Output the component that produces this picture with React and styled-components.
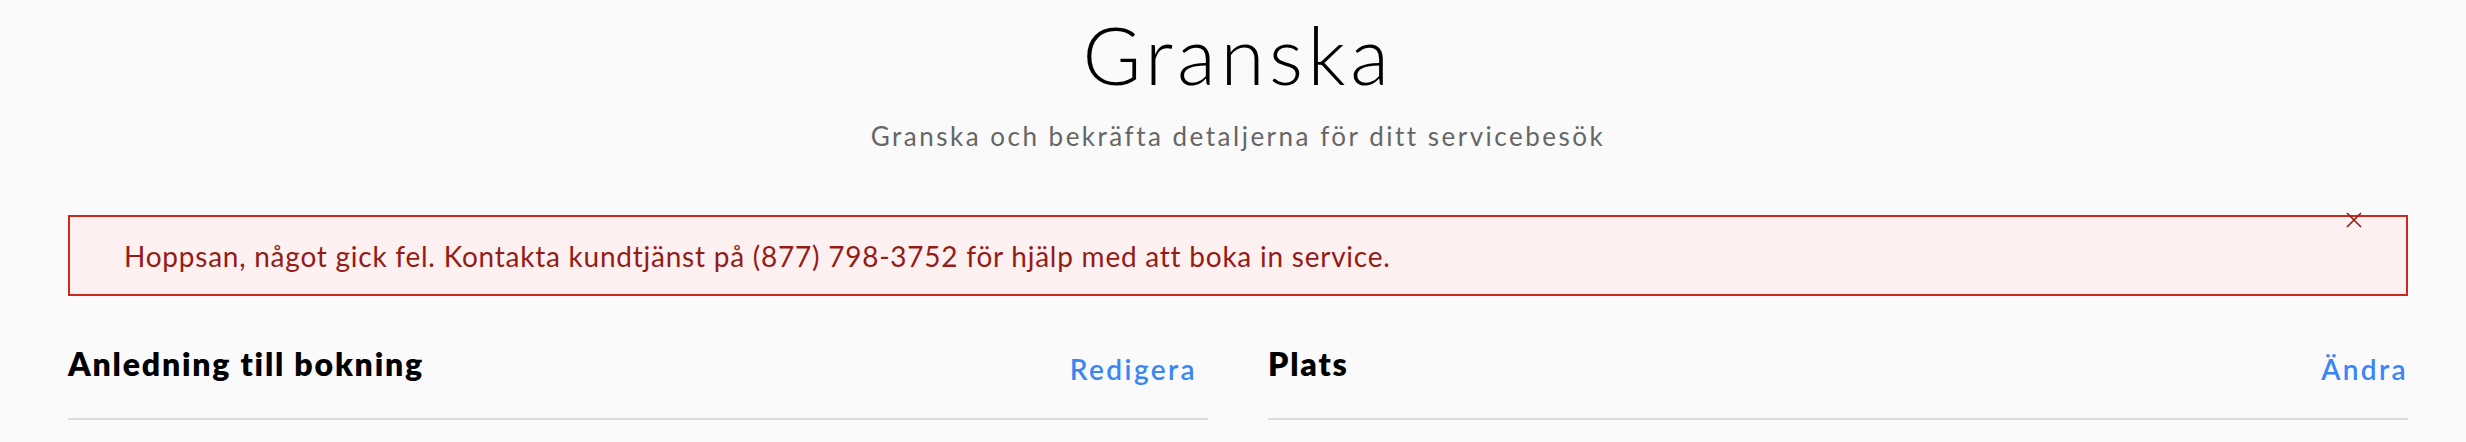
import React from 'react';
import styled, { createGlobalStyle } from 'styled-components';

const GlobalStyle = createGlobalStyle`
  html, body {
    margin: 0;
    padding: 0;
    background: #fafafa;
  }
  body {
    font-family: Lato, "Open Sans", sans-serif;
    color: #000;
  }
`;

const Page = styled.div`
  width: 2340px;
  margin-left: 68px;
  display: flex;
  flex-direction: column;
`;

const Header = styled.header`
  display: flex;
  flex-direction: column;
  align-items: center;
  padding-top: 14px;
`;

const Title = styled.h1`
  margin: 0;
  font-size: 80px;
  line-height: 80px;
  font-weight: 300;
  letter-spacing: 4.6px;
`;

const Subtitle = styled.p`
  margin: 27px 0 0;
  font-size: 26px;
  line-height: 30px;
  color: #666;
  letter-spacing: 2.5px;
`;

const Alert = styled.div`
  position: relative;
  margin-top: 64px;
  height: 77px;
  display: flex;
  align-items: center;
  padding-left: 54px;
  border: 2px solid #cc2a1f;
  background: #fcf0f0;
  color: #951c16;
  font-size: 28px;
  letter-spacing: 0.76px;
`;

const Close = styled.button`
  position: absolute;
  top: -7px;
  right: 42px;
  width: 20px;
  height: 20px;
  padding: 0;
  border: 0;
  background: none;
  color: #951c16;
  display: flex;
  align-items: center;
  justify-content: center;
`;

const Columns = styled.div`
  display: grid;
  grid-template-columns: 1fr 1fr;
  column-gap: 60px;
  margin-top: 48px;
`;

const Section = styled.section`
  display: flex;
  flex-direction: column;
`;

const SectionHead = styled.div`
  display: flex;
  justify-content: space-between;
  align-items: baseline;
  padding-bottom: 34px;
  padding-right: ${p => p.$inset || 0}px;
  border-bottom: 2px solid #dcdcdc;
`;

const SectionTitle = styled.h2`
  margin: 0;
  font-size: 32px;
  line-height: 40px;
  font-weight: 800;
  letter-spacing: 1.8px;
`;

const EditLink = styled.a`
  font-size: 28px;
  font-weight: 600;
  color: #3a86f5;
  text-decoration: none;
  letter-spacing: 2.4px;
  position: relative;
  top: 4px;
`;

function App() {
  return (
    <>
      <GlobalStyle />
      <Page>
        <Header>
          <Title>Granska</Title>
          <Subtitle>Granska och bekräfta detaljerna för ditt servicebesök</Subtitle>
        </Header>

        <Alert>
          Hoppsan, något gick fel. Kontakta kundtjänst på (877) 798-3752 för hjälp med att boka in service.
          <Close aria-label="Stäng">
            <svg width="16" height="16" viewBox="0 0 16 16">
              <path d="M1 1L15 15M15 1L1 15" stroke="currentColor" strokeWidth="1.6" />
            </svg>
          </Close>
        </Alert>

        <Columns>
          <Section>
            <SectionHead $inset={11}>
              <SectionTitle>Anledning till bokning</SectionTitle>
              <EditLink href="#">Redigera</EditLink>
            </SectionHead>
          </Section>
          <Section>
            <SectionHead>
              <SectionTitle>Plats</SectionTitle>
              <EditLink href="#">Ändra</EditLink>
            </SectionHead>
          </Section>
        </Columns>
      </Page>
    </>
  );
}

export default App;
